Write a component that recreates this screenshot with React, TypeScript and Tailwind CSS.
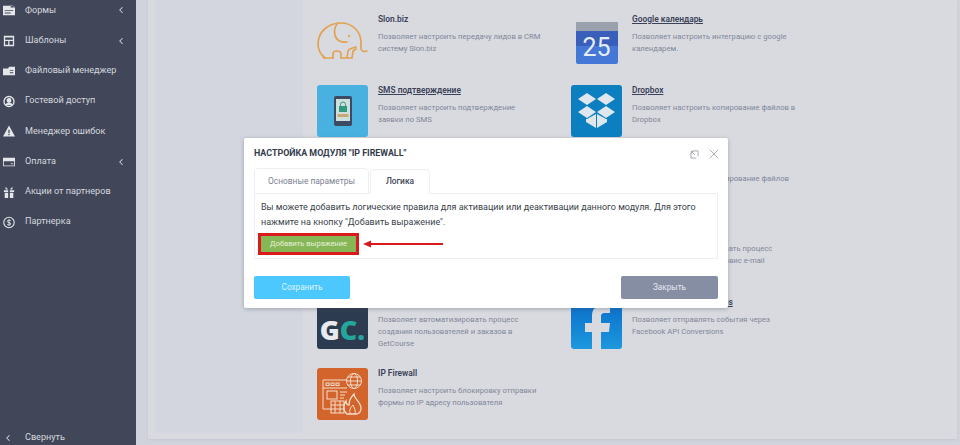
import React from "react";
import { ChevronLeft, X } from "lucide-react";

const side: [string, React.ReactNode, boolean][] = [
  ["Формы", <svg viewBox="0 0 14 14" className="w-3 h-3" fill="currentColor"><path d="M0 2h8l4 0 2 2v9H0z M2 7v1h10V7z M2 10v1h7v-1z M9 1v3h5z" fillRule="evenodd" /></svg>, true],
  ["Шаблоны", <svg viewBox="0 0 14 14" className="w-3 h-3" fill="currentColor"><path fillRule="evenodd" d="M1 1h12v12H1z M2.500 3v2.500h9V3z M2.500 7v4.500h3.500V7z M7.500 7v4.500h4V7z" /></svg>, true],
  ["Файловый менеджер", <svg viewBox="0 0 14 12" className="w-3 h-3" fill="currentColor"><path fillRule="evenodd" d="M0 3h6l1-2h7v10H0z M8 5v1h4V5z M8 7.500v1h4v-1z" /></svg>, false],
  ["Гостевой доступ", <svg viewBox="0 0 24 24" className="w-[13px] h-[13px]" fill="none" stroke="currentColor" strokeWidth="2.600"><circle cx="12" cy="12" r="10" /><circle cx="12" cy="10" r="3.500" fill="currentColor" /><path d="M6 19c1-4 11-4 12 0" fill="currentColor" /></svg>, false],
  ["Менеджер ошибок", <svg viewBox="0 0 14 13" className="w-3 h-3" fill="currentColor"><path fillRule="evenodd" d="M7 0l7 13H0z M6.300 5v4h1.400V5z M6.300 10v1.400h1.400V10z" /></svg>, false],
  ["Оплата", <svg viewBox="0 0 14 12" className="w-3 h-3" fill="currentColor"><path fillRule="evenodd" d="M0 1h14v10H0z M1 5v5h12V5z" /><path d="M9 7.500h3v1H9z" /></svg>, true],
  ["Акции от партнеров", <svg viewBox="0 0 14 14" className="w-3 h-3" fill="currentColor"><path d="M1 5h5v2H1z M8 5h5v2H8z M2 8h4v6H2z M8 8h4v6H8z M3 1l3 3H3z M11 1L8 4h3z" /></svg>, false],
  ["Партнерка", <svg viewBox="0 0 24 24" className="w-[13px] h-[13px]" fill="none" stroke="currentColor" strokeWidth="2.200"><circle cx="12" cy="12" r="10.500" /><path d="M15.500 8.500c-1-1.500-7-2-7 1.200s7 1.800 7 5c0 3-6 3-7.200 1M12 5.500v13" strokeWidth="1.800" /></svg>, false],
];

const Slon = () => (
  <svg viewBox="0 0 51 52" className="w-[51px] h-[52px]" fill="none" stroke="#e3a252" strokeWidth="1.700" strokeLinecap="round" strokeLinejoin="round">
    <path d="M8 44C3 40 1 35 1 30 1 18 11 9 24 9c11 0 20 8 20 20v5c0 3 2 4 6 3" />
    <path d="M8 44c-2 0-2-1-1-1 M16 44v-4c0-4 8-4 8 0v4" />
    <path d="M8 44h8 M24 44h6l1-7c1-3 6-3 8-4" />
    <path d="M30 44h5l1-7 3-2" />
    <path d="M21 9c-3 3-4 8-3 12 1 5 6 8 12 7" />
    <circle cx="32" cy="22" r="0.400" />
  </svg>
);

const Card = ({ icon, title, lines, underline = true }: { icon: React.ReactNode; title: string; lines: string[]; underline?: boolean }) => (
  <div className="flex gap-[10px] h-[70.8px]">
    <div className="w-[51px] h-[52px] shrink-0 flex items-center justify-center rounded-[3px] overflow-hidden">{icon}</div>
    <div className="min-w-0 -mt-[2px]">
      <div className={`text-[8.400px] leading-[14px] font-semibold text-[#3a4258] whitespace-nowrap ${underline ? "underline" : ""}`}>{title}</div>
      <div className="mt-[5px] text-[7.700px] leading-[11.800px] text-[#80879b]">
        {lines.map((l) => (
          <div key={l} className="whitespace-nowrap">{l}</div>
        ))}
      </div>
    </div>
  </div>
);

export default function App() {
  return (
    <div className="relative h-[445px] w-[960px] overflow-hidden flex bg-[#d0d3dc] font-['Roboto',sans-serif]">
      <aside className="w-[136px] shrink-0 bg-[#414759] text-[#d5d7de] flex flex-col justify-between text-[9.100px]">
        <div className="-mt-[4.700px]">
          {side.map(([label, icon, chev]) => (
            <div key={label} className="h-[30.250px] flex items-center pl-[3px] pr-[10px]">
              <span className="w-[12px] mr-[10px] flex justify-center text-[#e4e6ea]">{icon}</span>
              <span className="whitespace-nowrap flex-1">{label}</span>
              {chev && <ChevronLeft className="w-[10px] h-[10px] text-[#d5d7de]" strokeWidth={2.500} />}
            </div>
          ))}
        </div>
        <div className="h-[14px] flex items-center pl-[3px]">
          <ChevronLeft className="w-[10px] h-[10px] mr-[12px]" strokeWidth={2.500} />
          <span>Свернуть</span>
        </div>
      </aside>

      <main className="flex-1 pl-[12px] pr-[3px] h-[439px]">
        <div className="h-full bg-[#d9dadf] flex pl-[7px] pb-[6px] shadow-[0_1px_2px_#c4c8d2]">
          <div className="w-[148px] bg-[#d3d6de] shrink-0" />
          <div className="flex-1 pt-[14px] pl-[14px] grid grid-cols-[254px_1fr] content-start">
            <Card
              underline={false}
              title="Slon.biz"
              lines={["Позволяет настроить передачу лидов в CRM", "систему Slon.biz"]}
              icon={<Slon />}
            />
            <Card
              title="Google календарь"
              lines={["Позволяет настроить интеграцию с google", "календарем."]}
              icon={
                <div className="w-[42px] h-[42px] mt-[5px] rounded-[2px] bg-[#4477d6] flex flex-col relative overflow-hidden">
                  <div className="h-[9px] bg-[#9aa0ac] shrink-0" />
                  <div className="h-[15px] bg-[#3a5fbb] shrink-0" />
                  <div className="absolute inset-x-0 top-[9px] bottom-0 flex items-center justify-center text-[#e7edf8] text-[25px] leading-none">25</div>
                </div>
              }
            />
            <Card
              title="SMS подтверждение"
              lines={["Позволяет настроить подтверждение", "заявки по SMS"]}
              icon={
                <div className="w-full h-full bg-[#48b1e0] flex items-center justify-center">
                  <svg viewBox="0 0 18 30" className="w-[18px] h-[30px]">
                    <rect width="18" height="30" rx="2" fill="#3d4a63" />
                    <rect x="2" y="3" width="14" height="22" fill="#cfe0dc" />
                    <rect x="5" y="10" width="8" height="6" fill="#2f9a80" />
                    <path d="M6.500 10V8.500a2.500 2.500 0 0 1 5 0V10" stroke="#2f9a80" fill="none" />
                    <rect x="3.500" y="18" width="11" height="3" fill="#c9a878" />
                  </svg>
                </div>
              }
            />
            <Card
              title="Dropbox"
              lines={["Позволяет настроить копирование файлов в", "Dropbox"]}
              icon={
                <div className="w-full h-full bg-[#0b7fc0] flex items-center justify-center">
                  <svg viewBox="0 0 37 35" className="w-[37px] h-[35px]" fill="#dfe6ee">
                    <path d="M9 0l9 6-9 6-9-6z M28 0l9 6-9 6-9-6z M9 13l9 6-9 6-9-6z M28 13l9 6-9 6-9-6z M18 21v14l-10-6v-3l1 0z M19 21v14l10-6v-3l-1 0z" />
                  </svg>
                </div>
              }
            />
            <div />
            <Card title="Яндекс.Диск" lines={["Позволяет настроить копирование файлов", "в Яндекс.Диск"]} icon={<div className="w-full h-full bg-[#0b7fc0]" />} />
            <div />
            <Card title="E-mail" lines={["Позволяет автоматизировать процесс", "рассылки писем через сервис e-mail"]} icon={<div className="w-full h-full bg-[#0b7fc0]" />} />
            <Card
              title="GetCourse"
              lines={["Позволяет автоматизировать процесс", "создания пользователей и заказов в", "GetCourse"]}
              icon={
                <div className="w-full h-full bg-[#2d3b50] flex items-end justify-center pb-[6px] leading-none font-['Open_Sans',sans-serif] font-extrabold text-[27px]">
                  <span className="text-[#e8eaee]">G</span>
                  <span className="text-[#23a79d]">C</span>
                  <span className="text-[#23a79d]">.</span>
                </div>
              }
            />
            <Card
              title="Facebook API Conversions"
              lines={["Позволяет отправлять события через", "Facebook API Conversions"]}
              icon={
                <div className="w-full h-full bg-gradient-to-b from-[#0b69c7] to-[#1d98de]">
                  <svg viewBox="0 0 51 52" className="w-[51px] h-[52px]" fill="#d9dadf">
                    <path d="M21 52V35h-7V26h7v-7c0-7 4-11 11-11h7v8h-5c-3 0-4 1-4 4v6h9l-1 9h-8v17z" />
                  </svg>
                </div>
              }
            />
            <Card
              underline={false}
              title="IP Firewall"
              lines={["Позволяет настроить блокировку отправки", "формы по IP адресу пользователя"]}
              icon={
                <div className="w-full h-full bg-[#d2642c]">
                  <svg viewBox="0 0 51 52" className="w-[51px] h-[52px]" fill="none" stroke="#f5ddcc" strokeWidth="1">
                    <path d="M30 12H6v29h8" />
                    <path d="M6 20h24" />
                    <rect x="9" y="15" width="3" height="2.500" />
                    <rect x="14" y="15" width="3" height="2.500" />
                    <rect x="19" y="15" width="3" height="2.500" />
                    <rect x="10" y="23" width="10" height="8" />
                    <path d="M23 24h7M23 27h5M23 30h4" />
                    <circle cx="37" cy="13" r="7.500" />
                    <ellipse cx="37" cy="13" rx="3.500" ry="7.500" />
                    <path d="M29.500 13h15M31 9h12M31 17h12" />
                    <rect x="14" y="33" width="13" height="12" />
                    <path d="M14 37h13M14 41h13M18 33v12M23 33v12" />
                    <path d="M30 46c-4-3-4-9-1-13 0 2 1 4 3 4 0-4 2-8 5-11 0 5 7 8 7 14 0 3-1 5-4 6z" strokeWidth="1.300" />
                    <path d="M34 46c-2-2-2-5 2-9 1 3 3 5 2 9" />
                  </svg>
                </div>
              }
            />
            <div className="h-[20px]" />
          </div>
        </div>
      </main>

      <div className="absolute left-[244px] top-[138px] w-[484px] h-[170px] bg-white rounded-[2px] shadow-[0_1px_4px_rgba(60,70,90,0.35)] flex flex-col px-[10px] pt-[9px]">
        <div className="flex items-center h-[14px]">
          <span className="text-[8.900px] font-bold text-[#333b4a] flex-1 whitespace-nowrap">НАСТРОЙКА МОДУЛЯ "IP FIREWALL"</span>
          <svg viewBox="0 0 10 10" className="w-[9px] h-[9px] mr-[7px]" fill="none" stroke="#8a8f9a" strokeWidth="0.800">
            <path d="M3 1H9V7 M1 3V9H7 M1.500 1.500L5.500 5.500 M1.500 1.500h2.500M1.500 1.500v2.500" />
          </svg>
          <X className="w-[16px] h-[16px] text-[#7f8490] -mr-[4px]" strokeWidth={1} />
        </div>
        <div className="flex mt-[7px] h-[25px] text-[8.400px] items-end">
          <div className="w-[115px] h-[25px] border border-b-0 border-[#eceef1] rounded-t-[5px] flex items-center justify-center text-[#7c8291]">Основные параметры</div>
          <div className="ml-[1px] w-[60px] h-[25px] border border-[#eceef1] border-b-white rounded-t-[5px] flex items-center justify-center font-medium text-[#3f4758] -mb-[1px] relative z-10">Логика</div>
        </div>
        <div className="h-[66px] border border-[#eceef1] px-[6px] pt-[6px]">
          <p className="text-[9px] leading-[14.500px] text-[#3a3f4a]">
            Вы можете добавить логические правила для активации или деактивации данного модуля. Для этого нажмите на кнопку "Добавить выражение".
          </p>
          <div className="relative mt-[4px] -ml-[3px] w-[101px] h-[22px] border-[3px] border-[#d9191c] bg-[#86b756] flex items-center justify-center text-[7.500px] text-[#e8f1dc] whitespace-nowrap">
            Добавить выражение
            <svg viewBox="0 0 84 8" className="absolute left-[100px] top-[4px] w-[84px] h-[8px]">
              <path d="M2 4l8-3.500v2.500h72v2H10v2.500z" fill="#d9191c" />
            </svg>
          </div>
        </div>
        <div className="flex justify-between mt-[17px]">
          <button className="w-[96px] h-[23px] rounded-[2px] bg-[#4cc8ff] text-[#dff4ff] text-[8.200px]">Сохранить</button>
          <button className="w-[97px] h-[23px] rounded-[2px] bg-[#868ea4] text-[#e6e8ee] text-[8.200px]">Закрыть</button>
        </div>
      </div>
    </div>
  );
}
